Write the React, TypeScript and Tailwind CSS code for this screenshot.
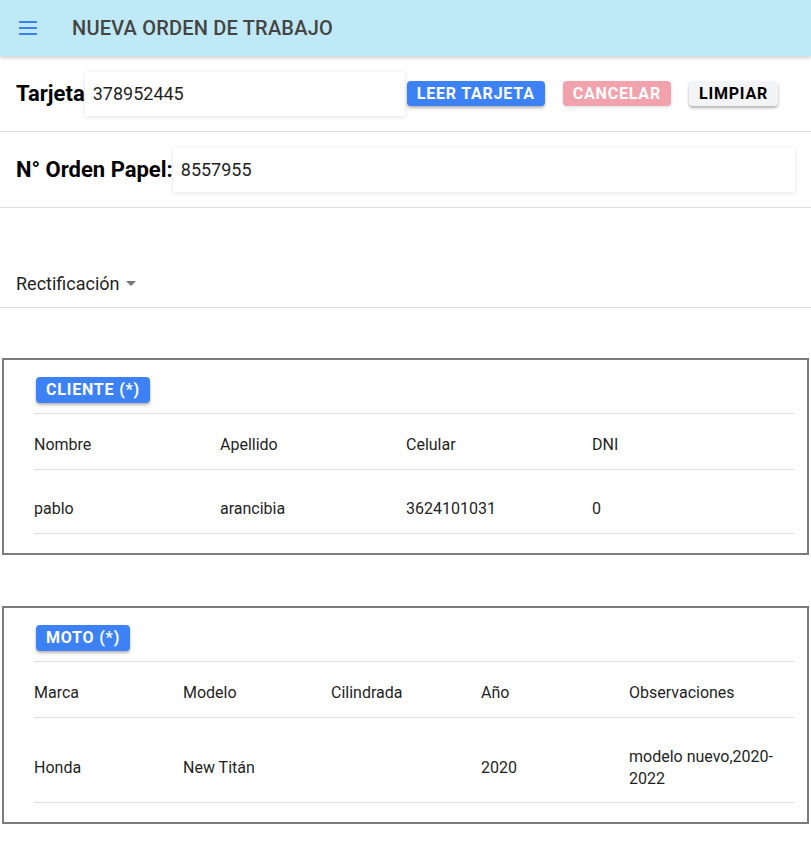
import React from "react";

const cliente = {
  cols: ["Nombre", "Apellido", "Celular", "DNI"],
  row: ["pablo", "arancibia", "3624101031", "0"],
};

const moto = {
  cols: ["Marca", "Modelo", "Cilindrada", "Año", "Observaciones"],
  row: ["Honda", "New Titán", "", "2020", "modelo nuevo,2020-2022"],
};

function Badge({ children }: { children: React.ReactNode }) {
  return (
    <span className="ml-[2px] inline-flex h-[26px] items-center rounded-[4px] bg-[#3c82f6] px-[10px] text-[16px] font-bold tracking-[0.8px] text-white shadow-[0_2px_3px_rgba(0,0,0,0.3)]">
      {children}
    </span>
  );
}

export default function App() {
  return (
    <main className="min-h-[853px] bg-white pb-6 text-[#1f1f1f]" style={{ fontFamily: "Roboto, sans-serif" }}>
      {/* Top bar */}
      <header className="relative z-10 flex h-14 items-center bg-[#bfe9f6] shadow-[0_2px_4px_rgba(0,0,0,0.2)]">
        <div className="ml-[19px] flex w-[18px] flex-col gap-[4px]">
          <span className="h-[2px] bg-[#3c82f6]" />
          <span className="h-[2px] bg-[#3c82f6]" />
          <span className="h-[2px] bg-[#3c82f6]" />
        </div>
        <h1 className="ml-[35px] text-[20px] font-medium tracking-[0.2px] text-[#444]">NUEVA ORDEN DE TRABAJO</h1>
      </header>

      {/* Tarjeta */}
      <div className="flex h-[76px] items-center border-b border-[#ddd] pl-4">
        <span className="text-[22px] font-bold text-black">Tarjeta</span>
        <div className="flex h-[44px] w-[320px] items-center bg-white pl-2 text-[18px] shadow-[0_1px_5px_rgba(0,0,0,0.12)]">
          378952445
        </div>
        <button className="ml-[2px] h-[25px] rounded-[4px] bg-[#3c82f6] px-[10px] text-[16px] font-bold tracking-[0.8px] text-white shadow-[0_2px_3px_rgba(0,0,0,0.3)]">
          LEER TARJETA
        </button>
        <button className="ml-[18px] h-[25px] rounded-[4px] bg-[#f2a2ac] px-[10px] text-[16px] font-bold tracking-[0.8px] text-white shadow-[0_1px_3px_rgba(0,0,0,0.15)]">
          CANCELAR
        </button>
        <button className="ml-[18px] h-[25px] rounded-[4px] bg-[#f3f4f6] px-[10px] text-[16px] font-bold tracking-[0.8px] text-black shadow-[0_2px_3px_rgba(0,0,0,0.3)]">
          LIMPIAR
        </button>
      </div>

      {/* Orden papel */}
      <div className="flex h-[76px] items-center border-b border-[#ddd] pl-4">
        <span className="text-[22px] font-bold text-black">N° Orden Papel:</span>
        <div className="flex h-[44px] w-[622px] items-center bg-white pl-2 text-[18px] shadow-[0_1px_5px_rgba(0,0,0,0.12)]">
          8557955
        </div>
      </div>

      {/* Tipo */}
      <div className="flex h-[100px] items-end border-b border-[#ddd] pb-[10px] pl-4">
        <span className="text-[18px]">Rectificación</span>
        <span className="mb-[11px] ml-[6px] h-0 w-0 border-x-[5px] border-t-[5px] border-x-transparent border-t-[#777]" />
      </div>

      {/* Cliente */}
      <section className="mx-[2px] mt-[50px] border-2 border-[#7c7c7c] pb-[19px] pl-[30px] pr-[13px] pt-[17px]">
        <Badge>CLIENTE (*)</Badge>
        <div className="mt-[10px] border-t border-[#ddd] text-[16px] leading-[22px]">
          <div className="grid grid-cols-[186px_186px_186px_1fr] items-center border-b border-[#ddd] pb-[13px] pt-[20px]">
            {cliente.cols.map((c) => (
              <span key={c}>{c}</span>
            ))}
          </div>
          <div className="grid grid-cols-[186px_186px_186px_1fr] items-center border-b border-[#ddd] pb-[13px] pt-[28px]">
            {cliente.row.map((c, i) => (
              <span key={i}>{c}</span>
            ))}
          </div>
        </div>
      </section>

      {/* Moto */}
      <section className="mx-[2px] mt-[51px] border-2 border-[#7c7c7c] pb-[19px] pl-[30px] pr-[13px] pt-[17px]">
        <Badge>MOTO (*)</Badge>
        <div className="mt-[10px] border-t border-[#ddd] text-[16px] leading-[22px]">
          <div className="grid grid-cols-[149px_148px_150px_148px_1fr] items-center border-b border-[#ddd] pb-[13px] pt-[20px]">
            {moto.cols.map((c) => (
              <span key={c}>{c}</span>
            ))}
          </div>
          <div className="grid grid-cols-[149px_148px_150px_148px_1fr] items-center border-b border-[#ddd] pb-[12px] pt-[28px]">
            {moto.row.map((c, i) => (
              <span key={i}>{c}</span>
            ))}
          </div>
        </div>
      </section>
    </main>
  );
}
